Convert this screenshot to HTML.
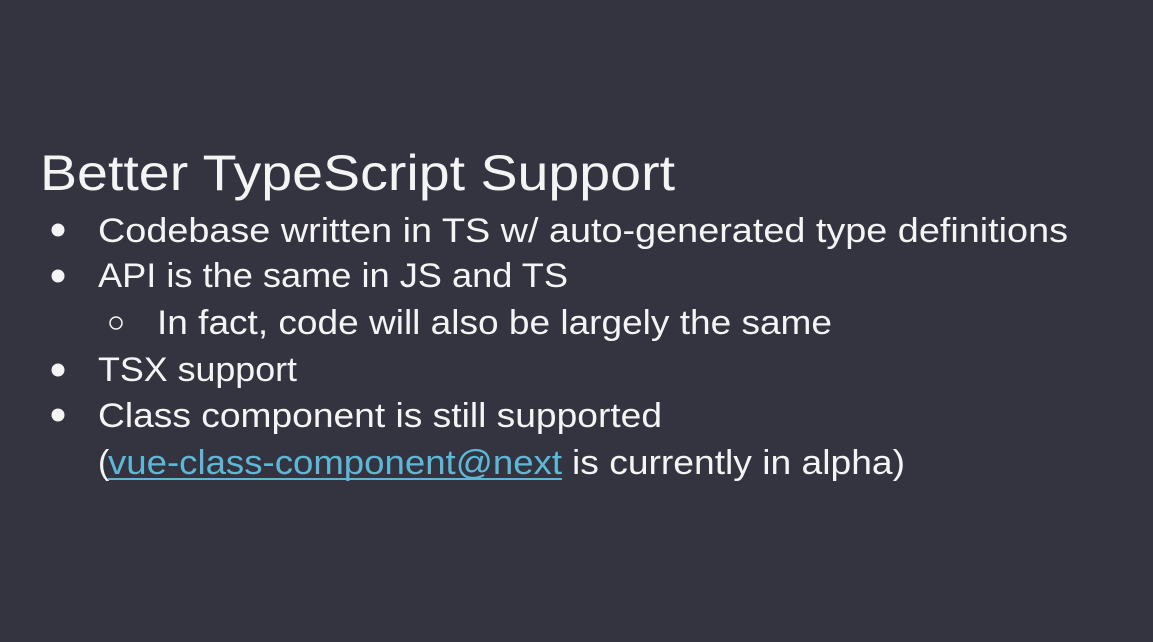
<!DOCTYPE html>
<html><head><meta charset="utf-8"><style>
html,body{margin:0;padding:0;background:#33343f;}
svg{display:block}
text{font-family:"Liberation Sans",sans-serif;fill:#f4f4f4;}
</style></head><body>
<svg width="1153" height="642" viewBox="0 0 1153 642">
<rect width="1153" height="642" fill="#33343f"/>
<text x="40" y="190" font-size="50" textLength="635" lengthAdjust="spacingAndGlyphs">Better TypeScript Support</text>
<circle cx="58" cy="230" r="6.5" fill="#f4f4f4"/>
<text x="98" y="242" font-size="34" textLength="970" lengthAdjust="spacingAndGlyphs">Codebase written in TS w/ auto-generated type definitions</text>
<circle cx="58" cy="276" r="6.5" fill="#f4f4f4"/>
<text x="98" y="287" font-size="34" textLength="470" lengthAdjust="spacingAndGlyphs">API is the same in JS and TS</text>
<circle cx="116" cy="323" r="6" fill="none" stroke="#f4f4f4" stroke-width="1.5"/>
<text x="157" y="334" font-size="34" textLength="675" lengthAdjust="spacingAndGlyphs">In fact, code will also be largely the same</text>
<circle cx="58" cy="370" r="6.5" fill="#f4f4f4"/>
<text x="98" y="381" font-size="34" textLength="199" lengthAdjust="spacingAndGlyphs">TSX support</text>
<circle cx="58" cy="415" r="6.5" fill="#f4f4f4"/>
<text x="98" y="427" font-size="34" textLength="564" lengthAdjust="spacingAndGlyphs">Class component is still supported</text>
<text x="98" y="474" font-size="34">(</text>
<text x="108" y="474" font-size="34" style="fill:#5db8d8" textLength="454" lengthAdjust="spacingAndGlyphs">vue-class-component@next</text>
<rect x="108" y="478" width="454" height="2" fill="#5db8d8"/>
<text x="572" y="474" font-size="34" textLength="333" lengthAdjust="spacingAndGlyphs">is currently in alpha)</text>
</svg>
</body></html>
